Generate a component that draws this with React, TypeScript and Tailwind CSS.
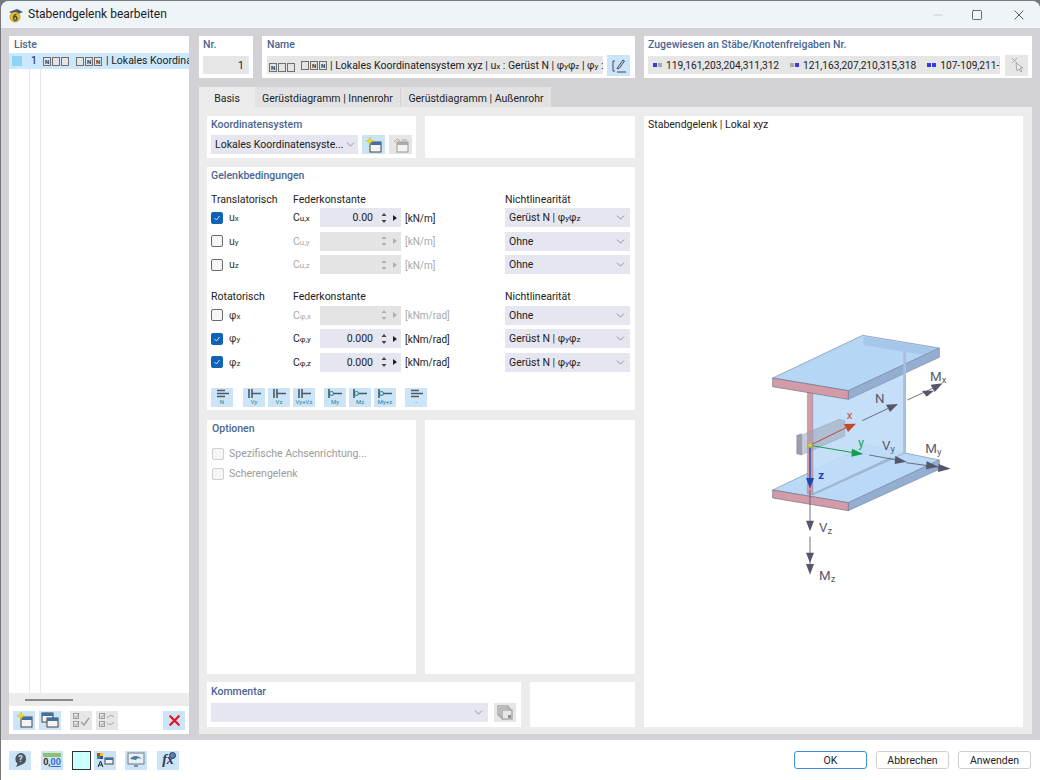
import React from 'react';
import { ChevronDown, Minus, Square, X } from 'lucide-react';

const heading = 'text-[10.5px] font-medium leading-[14px] text-[#4a6591]';

function Tile({ children, off, className = 'w-[22px] h-[19px]' }: { children: React.ReactNode; off?: boolean; className?: string }) {
    return (
        <div className={`${className} shrink-0 flex items-center justify-center ${off ? 'bg-[#e6e6e6]' : 'bg-[#cce4f7]'}`}>
            {children}
        </div>
    );
}

// the little boxed letters RFEM shows in its hinge code
function Code({ text }: { text: string }) {
    return (
        <span className="inline-flex shrink-0 gap-[1px] mr-[3px] align-[-1px]">
            {text.split('').map((c, i) => (
                <span
                    key={i}
                    className="w-[8px] h-[9px] shrink-0 border border-[#707070] bg-[#e4e4e4] text-[6px] leading-[7px] font-bold text-center text-[#333]"
                >
                    {c === '_' ? '' : c}
                </span>
            ))}
        </span>
    );
}

function Sub({ main, sub }: { main: string; sub: string }) {
    return (
        <span>
            {main}
            <span className="text-[8px]">{sub}</span>
        </span>
    );
}

function NewWindowIcon({ off }: { off?: boolean }) {
    return (
        <svg width="17" height="16" viewBox="0 0 17 16">
            <rect x="5" y="5" width="11" height="10" fill="#f4f4f4" stroke={off ? '#999' : '#444'} />
            <rect x="5" y="5" width="11" height="3" fill={off ? '#aaa' : '#3f6fa8'} />
            {off ? (
                <path d="M2 5l3-3 3 2M10 3h5" stroke="#aaa" fill="none" />
            ) : (
                <path d="M5 0l1 3 3 1-3 1-1 3-1-3-3-1 3-1z" fill="#f4e020" stroke="#c8b400" strokeWidth=".5" />
            )}
        </svg>
    );
}

function CopyWindowIcon() {
    return (
        <svg width="18" height="16" viewBox="0 0 18 16">
            <rect x="1" y="1" width="11" height="9" fill="#f4f4f4" stroke="#444" />
            <rect x="1" y="1" width="11" height="3" fill="#3f6fa8" />
            <rect x="6" y="6" width="11" height="9" fill="#f4f4f4" stroke="#444" />
            <rect x="6" y="6" width="11" height="3" fill="#3f6fa8" />
        </svg>
    );
}

function CheckListIcon({ swap }: { swap?: boolean }) {
    return (
        <svg width="18" height="16" viewBox="0 0 18 16" fill="none" stroke="#a0a0a0">
            <rect x="1.5" y="1.5" width="5" height="5" />
            <rect x="1.5" y="9.5" width="5" height="5" />
            <path d="M2.5 4l1.5 1.5 3-4M2.5 12l1.5 1.5 3-4" />
            {swap ? <path d="M9 6c2-3 5-3 7-1M16 10c-2 3-5 3-7 1" /> : <path d="M9 10l3 3 5-7" strokeWidth="1.5" />}
        </svg>
    );
}

function HingeIcon({ label, kind }: { label: string; kind: 'n' | 'v' | 'm' }) {
    return (
        <Tile className="w-[22px] h-[19px]">
            <div className="flex flex-col items-center">
                <svg width="16" height="9" viewBox="0 0 16 9">
                    {kind === 'n' && <path d="M3 1.5h8M3 4.5h12M3 7.5h8" stroke="#4d5a63" strokeWidth="1.6" />}
                    {kind === 'v' && <path d="M3 0v9M6 0v9M6 4.5h9" stroke="#4d5a63" strokeWidth="1.6" />}
                    {kind === 'm' && (
                        <>
                            <circle cx="4.5" cy="4.5" r="2" fill="none" stroke="#2f8f8f" strokeWidth="1.2" />
                            <path d="M2 0v9M7 4.5h8" stroke="#4d5a63" strokeWidth="1.6" />
                        </>
                    )}
                </svg>
                <span className="text-[6px] leading-[7px] text-[#2d7f8f]">{label}</span>
            </div>
        </Tile>
    );
}

function Check({ on, off }: { on?: boolean; off?: boolean }) {
    if (on) {
        return (
            <div className="w-[12px] h-[12px] shrink-0 rounded-[2px] bg-[#0f62b8] flex items-center justify-center">
                <svg width="8" height="8" viewBox="0 0 8 8">
                    <path d="M1.5 4l2 2 3-4" stroke="#cfe2f5" fill="none" />
                </svg>
            </div>
        );
    }
    return (
        <div className={`w-[12px] h-[12px] shrink-0 rounded-[2px] border bg-[#f6f6f6] ${off ? 'border-[#cfcfcf]' : 'border-[#6a6a6a]'}`} />
    );
}

function Select({ children, className }: { children: React.ReactNode; className: string }) {
    return (
        <div className={`${className} h-[19px] bg-[#e6e6f1] flex items-center justify-between pl-[4px] pr-[3px] text-[10.5px] text-[#222]`}>
            <span className="whitespace-nowrap pt-[1px]">{children}</span>
            <ChevronDown size={13} strokeWidth={1.2} className="text-[#666] shrink-0" />
        </div>
    );
}

type Row = { name: string; sub: string; cSub: string; unit: string; value?: string; nl: boolean };

function HingeRow({ row }: { row: Row }) {
    const on = row.value !== undefined;
    const muted = on ? 'text-[#222]' : 'text-[#a8a8a8]';
    return (
        <div className="flex items-center h-[19px] mb-[4.5px]">
            <Check on={on} />
            <div className="w-[70px] pl-[6px] pt-[1px] text-[10.5px] text-[#333]">
                <Sub main={row.name} sub={row.sub} />
            </div>
            <div className={`w-[27px] pt-[1px] text-[10.5px] ${muted}`}>
                <Sub main="C" sub={row.cSub} />
            </div>
            <div className={`w-[81px] h-[19px] flex items-center justify-end text-[10.5px] ${on ? 'bg-[#e6e6f1] text-[#222]' : 'bg-[#e4e4e4]'}`}>
                <span className="pt-[1px]">{row.value}</span>
                <svg width="8" height="12" viewBox="0 0 8 12" className="ml-[7px]">
                    <path d="M4 1l2.5 3h-5zM4 11l2.5-3h-5z" fill={on ? '#444' : '#b0b0b0'} />
                </svg>
                <svg width="6" height="8" viewBox="0 0 6 8" className="ml-[4px] mr-[3px]">
                    <path d="M1 1l4 3-4 3z" fill={on ? '#222' : '#b0b0b0'} />
                </svg>
            </div>
            <div className={`w-[104px] pl-[4px] pt-[1px] text-[10px] ${muted}`}>{row.unit}</div>
            <Select className="w-[125px]">
                {row.nl ? (
                    <>
                        Gerüst N | φ<span className="text-[8px]">y</span>φ<span className="text-[8px]">z</span>
                    </>
                ) : (
                    'Ohne'
                )}
            </Select>
        </div>
    );
}

const transRows: Row[] = [
    { name: 'u', sub: 'x', cSub: 'u,x', unit: '[kN/m]', value: '0.00', nl: true },
    { name: 'u', sub: 'y', cSub: 'u,y', unit: '[kN/m]', nl: false },
    { name: 'u', sub: 'z', cSub: 'u,z', unit: '[kN/m]', nl: false },
];
const rotRows: Row[] = [
    { name: 'φ', sub: 'x', cSub: 'φ,x', unit: '[kNm/rad]', nl: false },
    { name: 'φ', sub: 'y', cSub: 'φ,y', unit: '[kNm/rad]', value: '0.000', nl: true },
    { name: 'φ', sub: 'z', cSub: 'φ,z', unit: '[kNm/rad]', value: '0.000', nl: true },
];

function ColumnHeads({ first, className }: { first: string; className: string }) {
    return (
        <div className={`flex h-[14px] text-[10.5px] leading-[16px] text-[#222] ${className}`}>
            <div className="w-[82px]">{first}</div>
            <div className="w-[212px]">Federkonstante</div>
            <div>Nichtlinearität</div>
        </div>
    );
}

function Arrow({ d, end, color = '#55566a', w = 2.5 }: { d: string; end: string; color?: string; w?: number }) {
    return (
        <>
            <path d={d} stroke={color} strokeWidth={w} fill="none" />
            <polygon points={end} fill={color} />
        </>
    );
}

// hinge sketch, drawn in 3x coordinates
function BeamDrawing() {
    const label = { fontFamily: 'Roboto, sans-serif', fontSize: 40, fill: '#5a5b6c' };
    return (
        <svg width="220" height="270" viewBox="0 0 660 810">
            {/* bottom flange */}
            <polygon points="68,510 350,375 568,420 295,548" fill="#b9d9f6" stroke="#7d8ba6" strokeWidth="2" />
            <polygon points="295,548 568,420 568,448 295,572" fill="#93aed0" stroke="#7d8ba6" strokeWidth="2" />
            <polygon points="68,510 295,548 295,572 68,534" fill="#d39aa8" stroke="#6d7488" strokeWidth="2" />
            {/* web */}
            <polygon points="188,222 462,95 462,400 188,525" fill="#bfdcf8" fillOpacity=".9" stroke="#8ea0bd" strokeWidth="2" />
            <polygon points="172,215 188,218 188,525 172,522" fill="#d39aa8" stroke="#77788c" strokeWidth="1" />
            <polygon points="188,520 420,412 428,418 188,526" fill="#9fb7d6" />
            {/* top flange */}
            <polygon points="68,174 338,46 568,84 295,212" fill="#b5d6f4" stroke="#7d8ba6" strokeWidth="2" />
            <polygon points="340,50 568,86 568,112 460,95 340,75" fill="#9dc0e6" fillOpacity=".7" />
            <polygon points="295,212 568,84 568,112 295,238" fill="#93aed0" stroke="#7d8ba6" strokeWidth="2" />
            <polygon points="68,174 295,212 295,238 68,200" fill="#d39aa8" stroke="#6d7488" strokeWidth="2" />
            <polygon points="460,95 468,95 468,400 460,400" fill="#a9bfdc" />
            {/* end plate */}
            <polygon points="155,345 268,298 284,302 284,348 155,405" fill="#9aa3b4" fillOpacity=".55" stroke="#8a8d9a" />
            <polygon points="140,346 155,341 155,405 140,402" fill="#9a9dab" stroke="#7e8290" />
            {/* local axes */}
            <Arrow d="M180 376 L290 322" end="318,311 282,312 294,336" color="#bd4a2a" w={3} />
            <Arrow d="M180 376 L310 398" end="340,402 306,386 304,410" color="#12a04a" w={3} />
            <path d="M180 376 V480" stroke="#1c48b4" strokeWidth="4" />
            <polygon points="180,506 168,474 192,474" fill="#1c48b4" />
            <circle cx="180" cy="376" r="7" fill="#d6c640" stroke="#a89c30" />
            {/* forces */}
            <Arrow d="M337 302 L415 265" end="444,252 408,254 420,276" />
            <Arrow d="M472 240 L550 204" end="578,190 542,194 554,216" />
            <polygon points="552,212 516,212 530,230" fill="#55566a" />
            <Arrow d="M358 405 L440 420" end="470,425 436,408 434,432" />
            <Arrow d="M468 428 L570 442" end="602,446 566,432 564,456" />
            <polygon points="565,440 530,424 528,448" fill="#55566a" />
            <Arrow d="M180 510 V605" end="180,634 168,602 192,602" />
            <Arrow d="M180 650 V735" end="180,764 168,732 192,732" />
            <polygon points="180,728 168,698 192,698" fill="#55566a" />
            <text x="290" y="298" style={{ ...label, fill: '#c4502c', fontSize: 34 }}>x</text>
            <text x="325" y="380" style={{ ...label, fill: '#12a04a', fontSize: 36 }}>y</text>
            <text x="205" y="476" style={{ ...label, fill: '#1c48b4', fontSize: 34, fontWeight: 700 }}>z</text>
            <text x="375" y="248" style={label}>N</text>
            <text x="540" y="182" style={label}>M<tspan fontSize="28" dy="6">x</tspan></text>
            <text x="396" y="390" style={label}>V<tspan fontSize="28" dy="6">y</tspan></text>
            <text x="526" y="400" style={label}>M<tspan fontSize="28" dy="6">y</tspan></text>
            <text x="207" y="636" style={label}>V<tspan fontSize="28" dy="6">z</tspan></text>
            <text x="207" y="780" style={label}>M<tspan fontSize="28" dy="6">z</tspan></text>
        </svg>
    );
}

function MemberTag({ colors, text }: { colors: string[]; text: string }) {
    return (
        <div className="flex items-center gap-[4px] mr-[11px] shrink-0">
            <span className="flex gap-[1px]">
                {colors.map((c, i) => (
                    <span key={i} className={`w-[4px] h-[4px] ${c}`} />
                ))}
            </span>
            <span className="pt-[1px]">{text}</span>
        </div>
    );
}

export default function App() {
    return (
        <div className="w-[1040px] h-[780px] overflow-hidden bg-[#77777c] font-['Roboto',sans-serif]">
            <div className="w-[1039px] h-[779px] ml-[1px] mt-[1px] rounded-t-[8px] overflow-hidden flex flex-col bg-white">
                {/* title bar */}
                <div className="h-[27px] bg-[#eff4f9] flex items-center shrink-0">
                    <svg width="16" height="16" viewBox="0 0 16 16" className="ml-[7px]">
                        <path d="M1 5l8-3 6 3-7 3z" fill="#41597a" />
                        <circle cx="7" cy="10" r="5" fill="#e9c22d" stroke="#9c801a" strokeWidth=".6" />
                        <text x="4.5" y="13.5" fontSize="9" fontWeight="700" fill="#3a3a3a">6</text>
                    </svg>
                    <span className="ml-[4px] mb-[1px] text-[12px] text-[#1c1c1c]">Stabendgelenk bearbeiten</span>
                    <div className="ml-auto flex items-center">
                        <Minus size={14} strokeWidth={1} className="text-[#b5b5b5] mr-[26px]" />
                        <Square size={12} strokeWidth={1.3} className="text-[#222] mr-[28px]" />
                        <X size={16} strokeWidth={1.1} className="text-[#222] mr-[13px]" />
                    </div>
                </div>

                {/* main area */}
                <div className="h-[712px] bg-[#d2d2d6] flex pl-[8px] pt-[8px] shrink-0">
                    {/* list */}
                    <div className="w-[180px] h-[698px] bg-white flex flex-col shrink-0">
                        <div className={`${heading} pl-[5px] pt-[2px] h-[17px]`}>Liste</div>
                        <div className="flex-1 relative flex flex-col">
                            <div className="absolute left-[20px] top-0 bottom-0 w-[1px] bg-[#e8e8e8]" />
                            <div className="absolute left-[31px] top-0 bottom-0 w-[1px] bg-[#e8e8e8]" />
                            <div className="relative h-[16px] bg-[#cce8ff] flex items-center overflow-hidden whitespace-nowrap text-[10.5px] text-[#222]">
                                <span className="w-[10px] h-[10px] shrink-0 bg-[#8fd3f5] ml-[3px]" />
                                <span className="w-[15px] shrink-0 text-right mr-[6px]">1</span>
                                <Code text="N__" />
                                <span className="w-[4px] shrink-0" />
                                <Code text="_NN" />
                                <span className="shrink-0 ml-[1px]">| Lokales Koordina</span>
                            </div>
                        </div>
                        <div className="h-[13px] bg-[#ececec] flex items-center pl-[16px]">
                            <div className="w-[48px] h-[2px] bg-[#8a8a8a]" />
                        </div>
                        <div className="h-[28px] flex items-center pl-[4px] border-b-0">
                            <Tile><NewWindowIcon /></Tile>
                            <Tile className="w-[22px] h-[19px] ml-[4px]"><CopyWindowIcon /></Tile>
                            <Tile off className="w-[22px] h-[19px] ml-[9px]"><CheckListIcon /></Tile>
                            <Tile off className="w-[22px] h-[19px] ml-[4px]"><CheckListIcon swap /></Tile>
                            <Tile className="w-[22px] h-[19px] ml-[45px]">
                                <X size={17} strokeWidth={3.2} className="text-[#e8141c]" />
                            </Tile>
                        </div>
                    </div>

                    <div className="ml-[10px] w-[833px] flex flex-col">
                        {/* top row */}
                        <div className="flex h-[42px] shrink-0">
                            <div className="w-[54px] bg-white pl-[4px] pr-[4px] shrink-0">
                                <div className={`${heading} pt-[2px] h-[20px]`}>Nr.</div>
                                <div className="h-[18px] bg-[#e6e6e6] text-right pr-[5px] text-[10.5px] leading-[19px] text-[#222]">1</div>
                            </div>
                            <div className="ml-[9px] w-[373px] bg-white pl-[5px] shrink-0">
                                <div className={`${heading} pt-[2px] h-[20px]`}>Name</div>
                                <div className="flex items-start">
                                    <div className="w-[336px] h-[18px] bg-[#e6e6e6] overflow-hidden whitespace-nowrap text-[10.5px] leading-[19px] text-[#222] pl-[2px]">
                                        <Code text="N__" />
                                        <span className="w-[3px] inline-block" />
                                        <Code text="_NN" />
                                        | Lokales Koordinatensystem xyz | u<span className="text-[8px]">x</span> : Gerüst N | φ<span className="text-[8px]">y</span>φ<span className="text-[8px]">z</span> | φ<span className="text-[8px]">y</span> :
                                    </div>
                                    <Tile className="ml-[4px] w-[23px] h-[21px] -mt-[1px]">
                                        <svg width="16" height="16" viewBox="0 0 16 16" fill="none" stroke="#3a4a5a">
                                            <path d="M4 3H2v10h2M6 14h9M6 11l1-2 5-7 1.5 1-5 7z" />
                                        </svg>
                                    </Tile>
                                </div>
                            </div>
                            <div className="ml-[9px] w-[388px] bg-white pl-[4px] shrink-0">
                                <div className={`${heading} pt-[2px] h-[20px]`}>Zugewiesen an Stäbe/Knotenfreigaben Nr.</div>
                                <div className="flex items-start">
                                    <div className="w-[352px] h-[18px] bg-[#e6e6e6] overflow-hidden whitespace-nowrap flex items-center pl-[5px] text-[10.2px] text-[#222]">
                                        <MemberTag colors={['bg-[#3a3ae0]', 'bg-[#a8a8a8]']} text="119,161,203,204,311,312" />
                                        <MemberTag colors={['bg-[#a8a8a8]', 'bg-[#3a3ae0]']} text="121,163,207,210,315,318" />
                                        <MemberTag colors={['bg-[#3a3ae0]', 'bg-[#3a3ae0]']} text="107-109,211-2" />
                                    </div>
                                    <Tile off className="ml-[5px] mr-[4px] w-[23px] h-[21px] -mt-[1px]">
                                        <svg width="14" height="17" viewBox="0 0 14 17" fill="none" stroke="#a8a8a8">
                                            <path d="M2 1l5 5M7 1L2 6" />
                                            <path d="M6 6l1 8 2-2 2 3 1-1-2-3h3z" fill="#f0f0f0" />
                                        </svg>
                                    </Tile>
                                </div>
                            </div>
                        </div>

                        {/* tabs */}
                        <div className="flex h-[20px] mt-[9px] text-[10.5px] text-[#222] whitespace-nowrap shrink-0">
                            <div className="w-[56px] bg-[#ececec] text-center leading-[24px]">Basis</div>
                            <div className="w-[145px] bg-[#e2e2e4] text-center leading-[24px]">Gerüstdiagramm | Innenrohr</div>
                            <div className="ml-[1px] w-[150px] bg-[#e2e2e4] text-center leading-[24px]">Gerüstdiagramm | Außenrohr</div>
                        </div>

                        {/* tab body */}
                        <div className="h-[627px] w-[833px] bg-[#ececec] pl-[8px] pt-[9px] flex shrink-0">
                            <div className="w-[428px] flex flex-col shrink-0">
                                <div className="flex h-[42px] shrink-0">
                                    <div className="w-[209px] bg-white pl-[4px] pt-[1px]">
                                        <div className={`${heading} pt-[1px] h-[18px]`}>Koordinatensystem</div>
                                        <div className="flex">
                                            <Select className="w-[147px]">Lokales Koordinatensyste...</Select>
                                            <Tile className="ml-[4px] w-[23px] h-[19px]"><NewWindowIcon /></Tile>
                                            <Tile off className="ml-[4px] w-[23px] h-[19px]"><NewWindowIcon off /></Tile>
                                        </div>
                                    </div>
                                    <div className="ml-[9px] flex-1 bg-white" />
                                </div>

                                <div className="mt-[9px] h-[243px] bg-white pl-[4px] pt-[1px] shrink-0">
                                    <div className={`${heading} pt-[1px] h-[24px]`}>Gelenkbedingungen</div>
                                    <ColumnHeads first="Translatorisch" className="mb-[2px]" />
                                    {transRows.map((r, i) => (
                                        <HingeRow key={i} row={r} />
                                    ))}
                                    <div className="h-[10px]" />
                                    <ColumnHeads first="Rotatorisch" className="mb-[3px]" />
                                    {rotRows.map((r, i) => (
                                        <HingeRow key={i} row={r} />
                                    ))}
                                    <div className="flex mt-[16px]">
                                        <HingeIcon label="N" kind="n" />
                                        <div className="w-[10px]" />
                                        <div className="flex gap-[3px]">
                                            <HingeIcon label="Vy" kind="v" />
                                            <HingeIcon label="Vz" kind="v" />
                                            <HingeIcon label="Vy+Vz" kind="v" />
                                        </div>
                                        <div className="w-[9px]" />
                                        <div className="flex gap-[3px]">
                                            <HingeIcon label="My" kind="m" />
                                            <HingeIcon label="Mz" kind="m" />
                                            <HingeIcon label="My+z" kind="m" />
                                        </div>
                                        <div className="w-[9px]" />
                                        <HingeIcon label="-" kind="n" />
                                    </div>
                                </div>

                                <div className="mt-[10px] h-[254px] flex shrink-0">
                                    <div className="w-[209px] bg-white pl-[5px] pt-[1px]">
                                        <div className={`${heading} pt-[1px] h-[20px]`}>Optionen</div>
                                        <div className="flex items-center h-[20px] mt-[3px] text-[10.5px] text-[#9a9a9a]">
                                            <Check off />
                                            <span className="ml-[5px]">Spezifische Achsenrichtung...</span>
                                        </div>
                                        <div className="flex items-center h-[20px] text-[10.5px] text-[#9a9a9a]">
                                            <Check off />
                                            <span className="ml-[5px]">Scherengelenk</span>
                                        </div>
                                    </div>
                                    <div className="ml-[9px] flex-1 bg-white" />
                                </div>

                                <div className="mt-[8px] h-[45px] flex shrink-0">
                                    <div className="w-[314px] bg-white pl-[4px] pt-[2px]">
                                        <div className={`${heading} pt-[1px] h-[19px]`}>Kommentar</div>
                                        <div className="flex">
                                            <Select className="w-[277px]">{''}</Select>
                                            <Tile off className="ml-[6px] w-[22px] h-[19px]">
                                                <svg width="16" height="15" viewBox="0 0 16 15" fill="#e6e6e6" stroke="#8f8f8f">
                                                    <rect x="1" y="1" width="10" height="9" />
                                                    <rect x="3" y="3" width="10" height="9" />
                                                    <rect x="5" y="5" width="10" height="9" />
                                                    <rect x="11" y="10" width="3" height="3" fill="#8f8f8f" stroke="none" />
                                                </svg>
                                            </Tile>
                                        </div>
                                    </div>
                                    <div className="ml-[9px] flex-1 bg-white" />
                                </div>
                            </div>

                            {/* preview */}
                            <div className="ml-[9px] w-[379px] h-[611px] bg-white shrink-0">
                                <div className="pl-[4px] pt-[2px] text-[10.5px] leading-[14px] text-[#222]">Stabendgelenk | Lokal xyz</div>
                                <div className="ml-[106px] mt-[188px] w-[220px]">
                                    <BeamDrawing />
                                </div>
                            </div>
                        </div>
                    </div>
                </div>

                {/* footer */}
                <div className="flex-1 bg-white flex items-center pl-[8px]">
                    <Tile>
                        <svg width="16" height="16" viewBox="0 0 16 16">
                            <path d="M9 1a6 6 0 0 1 1 11.6L4 15l1.5-3.5A6 6 0 0 1 9 1z" fill="#4a5560" />
                            <text x="6.3" y="10" fontSize="9" fontWeight="700" fill="#cce4f7">?</text>
                        </svg>
                    </Tile>
                    <Tile className="ml-[10px] w-[22px] h-[19px]">
                        <div className="flex flex-col items-center">
                            <div className="w-[18px] h-[4px] bg-[#8fc06a]" />
                            <span className="text-[9px] leading-[11px] font-bold text-[#333]">
                                0,<span className="text-[#3a6fd0] underline">00</span>
                            </span>
                        </div>
                    </Tile>
                    <div className="ml-[9px] w-[19px] h-[19px] bg-[#ccffff] border border-[#333]" />
                    <Tile className="ml-[3px] w-[22px] h-[19px]">
                        <svg width="18" height="16" viewBox="0 0 18 16">
                            <rect x="1" y="1" width="3" height="3" fill="#d8342c" />
                            <rect x="4" y="1" width="3" height="3" fill="#e8c820" />
                            <rect x="1" y="4" width="3" height="3" fill="#3a9a3a" />
                            <rect x="4" y="4" width="3" height="3" fill="#3050c0" />
                            <path d="M2 15l2.5-6 2.5 6M3 13h3" stroke="#222" fill="none" />
                            <rect x="9" y="6" width="8" height="6" fill="#f4f4f4" stroke="#444" />
                            <rect x="9" y="6" width="8" height="2" fill="#3f6fa8" />
                        </svg>
                    </Tile>
                    <Tile className="ml-[9px] w-[22px] h-[19px]">
                        <svg width="18" height="16" viewBox="0 0 18 16">
                            <rect x="1" y="1" width="16" height="11" fill="#e8eef4" stroke="#6a7a8a" />
                            <path d="M3 7c3-4 8-4 12 0-3-1-5-1-6 1z" fill="#4a7aa0" />
                            <path d="M7 14h4" stroke="#6a7a8a" strokeWidth="1.5" />
                        </svg>
                    </Tile>
                    <Tile className="ml-[10px] w-[22px] h-[19px] relative">
                        <span className="font-['Liberation_Serif',serif] italic font-bold text-[14px] leading-none text-[#2b3a55]">
                            fx
                        </span>
                        <span className="absolute right-[3px] top-[1px] w-[7px] h-[7px] rounded-full bg-[#5a80b8] border border-[#2b3a55]" />
                    </Tile>
                    <div className="ml-auto flex gap-[9px] mr-[9px] text-[10.5px] text-[#222]">
                        <div className="w-[73px] h-[18px] rounded-[3px] border border-[#3f8fd8] text-center leading-[17px]">OK</div>
                        <div className="w-[73px] h-[18px] rounded-[3px] border border-[#cfcfcf] text-center leading-[17px]">Abbrechen</div>
                        <div className="w-[73px] h-[18px] rounded-[3px] border border-[#cfcfcf] text-center leading-[17px]">Anwenden</div>
                    </div>
                </div>
            </div>
        </div>
    );
}
